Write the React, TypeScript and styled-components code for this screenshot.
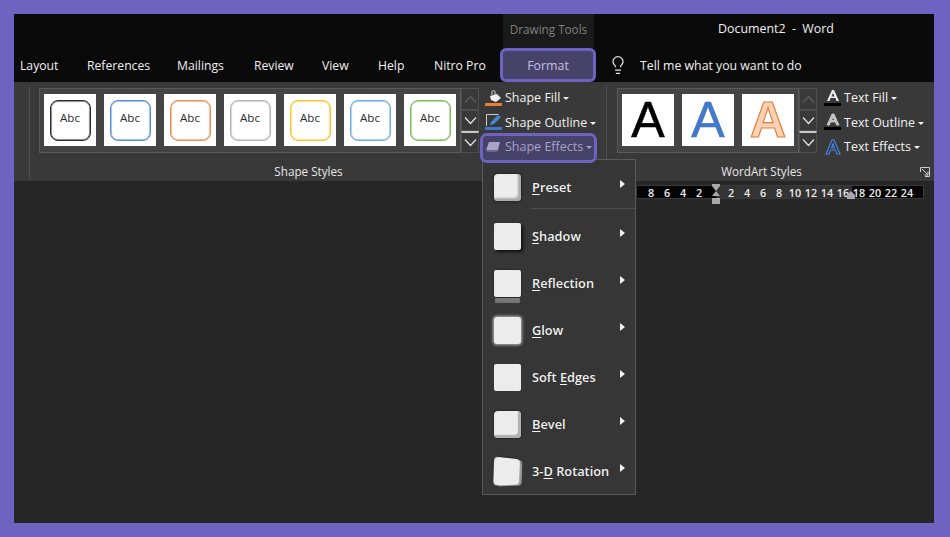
import React from "react";
import styled, { createGlobalStyle, css } from "styled-components";
import { Lightbulb } from "lucide-react";

const Global = createGlobalStyle`
  html, body { margin: 0; padding: 0; height: 537px; overflow: hidden; }
  body { background: #6e63c1; font-family: "Open Sans", "Noto Sans", sans-serif; }
  #root { height: 537px; }
`;

const Page = styled.div`
  box-sizing: border-box;
  height: 537px;
  padding: 14px 16px 14px 14px;
  background: #6e63c1;
`;
const Frame = styled.div`
  display: flex;
  flex-direction: column;
  height: 100%;
  background: #262626;
  color: #f0f0f0;
`;
const Header = styled.header`
  background: #0a0a0a;
  height: 68px;
  display: flex;
  flex-direction: column;
`;
const TitleRow = styled.div`
  height: 34px;
  display: flex;
  padding-left: 489px;
`;
const Context = styled.div`
  width: 91px;
  background: #1a1a1a;
  color: #808080;
  font-size: 11.7px;
  text-align: center;
  line-height: 31px;
`;
const DocTitle = styled.div`
  margin-left: 124px;
  font-size: 12.4px;
  line-height: 30px;
  white-space: pre;
`;
const Tabs = styled.nav`
  height: 34px;
  display: flex;
  align-items: center;
  padding-left: 6px;
`;
const Tab = styled.span<{ $w: number }>`
  width: ${(p) => p.$w}px;
  flex: none;
  font-size: 12.2px;
  white-space: nowrap;
`;
const FormatTab = styled.span`
  box-sizing: border-box;
  width: 96px;
  height: 34px;
  margin-left: -4px;
  border: 3px solid #6e63c1;
  border-radius: 6px;
  background: #474268;
  color: #c4bfe0;
  font-size: 12.4px;
  display: flex;
  align-items: center;
  justify-content: center;
`;
const Bulb = styled.span`
  margin-left: 12px;
  width: 32px;
  display: flex;
  color: #e8e8e8;
`;
const Search = styled.span`
  font-size: 12.3px;
`;
const Ribbon = styled.section`
  height: 99px;
  background: #393939;
  display: flex;
  padding-left: 15px;
  box-sizing: border-box;
`;
const Group = styled.div<{ $w: number; $pad: number }>`
  box-sizing: border-box;
  width: ${(p) => p.$w}px;
  height: 93px;
  margin-top: 4px;
  padding-left: ${(p) => p.$pad}px;
  border-left: 1px solid #4e4e4e;
  display: flex;
  flex-direction: column;
  position: relative;
`;
const GroupBody = styled.div`
  display: flex;
  height: 73px;
`;
const Gallery = styled.div`
  display: flex;
  align-items: flex-start;
  margin-top: 2px;
`;
const Thumbs = styled.div`
  box-sizing: border-box;
  height: 65px;
  border: 1px solid #5a5a5a;
  padding: 5px 4px;
  display: flex;
  gap: 8px;
  background: #444;
`;
const Thumb = styled.div`
  width: 52px;
  height: 52px;
  background: #fff;
  display: flex;
  align-items: center;
  justify-content: center;
`;
const AbcBox = styled.div<{ $c: string }>`
  box-sizing: border-box;
  width: 41px;
  height: 41px;
  border: 1px solid ${(p) => p.$c};
  box-shadow: inset 0 0 1px 0.5px ${(p) => p.$c};
  border-radius: 8px;
  padding-bottom: 5px;
  color: #2b2b2b;
  font-size: 11.6px;
  display: flex;
  align-items: center;
  justify-content: center;
`;
const BigA = styled.span<{ $c: string; $s: string; $sw: number; $bold?: boolean }>`
  font-family: "Liberation Sans", sans-serif;
  font-size: 50px;
  line-height: 1;
  color: ${(p) => p.$c};
  -webkit-text-stroke: ${(p) => p.$sw}px ${(p) => p.$s};
  ${(p) => p.$bold && css`font-weight: 700;`}
`;
const Spin = styled.div`
  width: 18px;
  display: flex;
  flex-direction: column;
  height: 65px;
`;
const SpinBtn = styled.div<{ $h: number; $dim?: boolean; $top?: boolean }>`
  box-sizing: border-box;
  height: ${(p) => p.$h}px;
  border: 1px solid #4e4e4e;
  ${(p) => p.$top && css`border-top: 2px solid #c8c8c8;`}
  display: flex;
  align-items: center;
  justify-content: center;
  color: ${(p) => (p.$dim ? "#5e5e5e" : "#e4e4e4")};
`;
const Commands = styled.div<{ $ml: number }>`
  margin-left: ${(p) => p.$ml}px;
  display: flex;
  flex-direction: column;
  margin-top: -0.5px;
`;
const Cmd = styled.div<{ $active?: boolean }>`
  position: relative;
  box-sizing: border-box;
  height: 24.5px;
  display: flex;
  align-items: center;
  gap: 2px;
  font-size: 12.5px;
  white-space: nowrap;
  ${(p) => p.$active && css`color: #a8a3c9;`}
`;
const Highlight = styled.div`
  position: absolute;
  z-index: 6;
  box-sizing: border-box;
  left: -5px;
  top: -2px;
  width: 117px;
  height: 30px;
  border: 3px solid #6e63c1;
  border-radius: 7px;
  background: #474268;
`;
const CmdIcon = styled.svg`
  width: 18px;
  height: 18px;
  flex: none;
  position: relative;
  z-index: 7;
`;
const CmdLabel = styled.span`
  position: relative;
  z-index: 7;
`;
const Caret = styled.span`
  position: relative;
  display: inline-block;
  margin-left: 3px;
  border-left: 3px solid transparent;
  border-right: 3px solid transparent;
  border-top: 3px solid currentColor;
  vertical-align: middle;
`;
const GroupLabel = styled.div<{ $pr: number }>`
  text-align: center;
  padding-right: ${(p) => p.$pr}px;
  font-size: 11.7px;
  line-height: 16px;
  margin-top: 4px;
  color: #e6e6e6;
`;
const Launcher = styled.svg`
  position: absolute;
  right: 4px;
  top: 81px;
  width: 10px;
  height: 10px;
`;
const RulerRow = styled.div`
  height: 12px;
  margin: 4px 0 0 622px;
  width: 286px;
  background: #050505;
  display: flex;
  font-size: 10.8px;
  font-weight: 600;
  line-height: 13px;
  border: 1px solid #3a3a3a;
  position: relative;
`;
const RulerActive = styled.div`
  position: absolute;
  left: 79px;
  top: 0;
  width: 136px;
  height: 12px;
  background: #333;
`;
const RulerNum = styled.span<{ $first?: boolean }>`
  position: relative;
  width: 16px;
  flex: none;
  text-align: center;
  color: #eee;
  ${(p) => p.$first && css`margin-left: 6px;`}
`;
const Marker = styled.svg<{ $left: number; $top: number }>`
  position: absolute;
  left: ${(p) => p.$left}px;
  top: ${(p) => p.$top}px;
`;
const Menu = styled.div`
  position: absolute;
  z-index: 5;
  left: -3px;
  top: 24.5px;
  width: 154px;
  height: 336px;
  box-sizing: border-box;
  background: #363636;
  border: 1px solid #5a5a5a;
  padding-top: 6px;
  color: #f2f2f2;
`;
const MenuRow = styled.div<{ $h: number }>`
  height: ${(p) => p.$h}px;
  display: flex;
  align-items: center;
  padding-left: 11px;
  position: relative;
`;
const Divider = styled.div`
  height: 1px;
  margin: 0 0 3.5px 48px;
  background: #4e4e4e;
`;
const MenuLabel = styled.span`
  font-size: 12.8px;
  font-weight: 600;
  margin-left: 11px;
  white-space: nowrap;
  text-shadow: 0 0 1px #0008;
  u { text-underline-offset: 2px; }
`;
const Arrow = styled.span`
  position: absolute;
  left: 137px;
  top: calc(50% - 7px);
  border-top: 4px solid transparent;
  border-bottom: 4px solid transparent;
  border-left: 5px solid #f2f2f2;
`;
type Fx = "preset" | "shadow" | "reflection" | "glow" | "soft" | "bevel" | "rot";
const fxStyles: Record<Fx, ReturnType<typeof css>> = {
  preset: css`border-radius: 4px; box-shadow: inset -3px -3px 2px #aaa, 0 0 3px #111;`,
  shadow: css`border-radius: 2px; box-shadow: 2px 2px 3px #111;`,
  reflection: css`border-radius: 2px; box-shadow: 0 1px 0 #2a2a2a, 0 7px 1px -1px #777, 0 0 2px #111;`,
  glow: css`border-radius: 3px; box-shadow: 0 0 3px 1px #b5b5b5;`,
  soft: css`border-radius: 2px; filter: blur(0.7px);`,
  bevel: css`border-radius: 4px; box-shadow: inset -3px -3px 1px #b0b0b0, 0 0 2px #111;`,
  rot: css`border-radius: 4px; transform: perspective(60px) rotateY(18deg) rotateZ(2deg); box-shadow: 3px 1px 0 #999, 0 0 2px #111;`,
};
const FxIcon = styled.span<{ $fx: Fx }>`
  display: block;
  flex: none;
  width: 27px;
  height: 27px;
  background: #ececec;
  ${(p) => fxStyles[p.$fx]}
`;

const Chevron = ({ up }: { up?: boolean }) => (
  <svg width="13" height="8" viewBox="0 0 13 8" fill="none" stroke="currentColor" strokeWidth="1.2">
    <path d={up ? "M1 7.5 6.5 1.5 12 7.5" : "M1 .5 6.5 6.5 12 .5"} />
  </svg>
);
const SpinColumn = () => (
  <Spin>
    <SpinBtn $h={22} $dim><Chevron up /></SpinBtn>
    <SpinBtn $h={21}><Chevron /></SpinBtn>
    <SpinBtn $h={22} $top><Chevron /></SpinBtn>
  </Spin>
);

const abc = ["#2a2a2a", "#5b8bd6", "#ee8d53", "#b4b4b4", "#fdc32c", "#6fa9e6", "#7fbb5d"];
const menu: { fx: Fx; pre: string; key: string; post: string }[] = [
  { fx: "shadow", pre: "", key: "S", post: "hadow" },
  { fx: "reflection", pre: "", key: "R", post: "eflection" },
  { fx: "glow", pre: "", key: "G", post: "low" },
  { fx: "soft", pre: "Soft ", key: "E", post: "dges" },
  { fx: "bevel", pre: "", key: "B", post: "evel" },
  { fx: "rot", pre: "3-", key: "D", post: " Rotation" },
];
const left = ["6", "4", "2"];
const right = ["2", "4", "6", "8", "10", "12", "14", "16", "18", "20", "22", "24"];

export default function App() {
  return (
    <Page>
      <Global />
      <Frame>
        <Header>
          <TitleRow>
            <Context>Drawing Tools</Context>
            <DocTitle>Document2  -  Word</DocTitle>
          </TitleRow>
          <Tabs>
            <Tab $w={67}>Layout</Tab>
            <Tab $w={90}>References</Tab>
            <Tab $w={77}>Mailings</Tab>
            <Tab $w={68}>Review</Tab>
            <Tab $w={56}>View</Tab>
            <Tab $w={56}>Help</Tab>
            <Tab $w={70}>Nitro Pro</Tab>
            <FormatTab>Format</FormatTab>
            <Bulb><Lightbulb size={20} strokeWidth={1.5} /></Bulb>
            <Search>Tell me what you want to do</Search>
          </Tabs>
        </Header>
        <Ribbon>
          <Group $w={577} $pad={9}>
            <GroupBody>
              <Gallery>
                <Thumbs>
                  {abc.map((c) => (
                    <Thumb key={c}><AbcBox $c={c}>Abc</AbcBox></Thumb>
                  ))}
                </Thumbs>
                <SpinColumn />
              </Gallery>
              <Commands $ml={6}>
                <Cmd>
                  <CmdIcon viewBox="0 0 18 18">
                    <path d="M5 7l7-2 4 4-5 4-5-2z" fill="#f2f2f2" />
                    <path d="M7 6V3c0-2 3-2 3 0v3" fill="none" stroke="#ddd" />
                    <rect x="0" y="14" width="17" height="3" fill="#ed7d31" />
                  </CmdIcon>
                  <CmdLabel>Shape Fill<Caret /></CmdLabel>
                </Cmd>
                <Cmd>
                  <CmdIcon viewBox="0 0 18 18">
                    <path d="M1.500 13V1.500h12" fill="none" stroke="#ccc" />
                    <path d="M5 12l1-3 7-7 3 2-7 7z" fill="#4a87d8" />
                    <rect x="0" y="14" width="17" height="3" fill="#3f78c9" />
                  </CmdIcon>
                  <CmdLabel>Shape Outline<Caret /></CmdLabel>
                </Cmd>
                <Cmd $active>
                  <Highlight />
                  <CmdIcon viewBox="0 0 18 18">
                    <path d="M4 4h11l-2 8H1z" fill="#a8a3c9" />
                    <path d="M1 12h12l-1 2H2z" fill="#6a6690" />
                  </CmdIcon>
                  <CmdLabel>Shape Effects<Caret /></CmdLabel>
                  <Menu>
                    <MenuRow $h={42}>
                      <FxIcon $fx="preset" />
                      <MenuLabel><u>P</u>reset</MenuLabel>
                      <Arrow />
                    </MenuRow>
                    <Divider />
                    {menu.map((m) => (
                      <MenuRow key={m.fx} $h={47}>
                        <FxIcon $fx={m.fx} />
                        <MenuLabel>{m.pre}<u>{m.key}</u>{m.post}</MenuLabel>
                        <Arrow />
                      </MenuRow>
                    ))}
                  </Menu>
                </Cmd>
              </Commands>
            </GroupBody>
            <GroupLabel $pr={28}>Shape Styles</GroupLabel>
          </Group>
          <Group $w={328} $pad={10}>
            <GroupBody>
              <Gallery>
                <Thumbs>
                  <Thumb><BigA $c="#000" $s="#000" $sw={0.6}>A</BigA></Thumb>
                  <Thumb><BigA $c="#4478c8" $s="#4478c8" $sw={0.6}>A</BigA></Thumb>
                  <Thumb><BigA $c="#f9d2b8" $s="#ea7f3c" $sw={1.2} $bold>A</BigA></Thumb>
                </Thumbs>
                <SpinColumn />
              </Gallery>
              <Commands $ml={7}>
                <Cmd>
                  <CmdIcon viewBox="0 0 18 18">
                    <path d="M3 12 8 1h2l5 11h-2.500l-1-3h-5l-1 3zM7.500 7.500h3L9 4z" fill="#ececec" />
                    <rect x="0" y="14" width="17" height="3" fill="#000" />
                  </CmdIcon>
                  <CmdLabel>Text Fill<Caret /></CmdLabel>
                </Cmd>
                <Cmd>
                  <CmdIcon viewBox="0 0 18 18">
                    <path d="M3 12 8 1h2l5 11h-2.500l-1-3h-5l-1 3zM7.500 7.500h3L9 4z" fill="#bdbdbd" stroke="#eee" strokeWidth=".6" />
                    <rect x="0" y="14" width="17" height="3" fill="#000" />
                  </CmdIcon>
                  <CmdLabel>Text Outline<Caret /></CmdLabel>
                </Cmd>
                <Cmd>
                  <CmdIcon viewBox="0 0 18 18">
                    <path d="M2 16 8 2h2l6 14h-3l-1.500-4h-5L5 16zM7.500 10h3L9 6z" fill="#26344d" stroke="#4a87d8" strokeWidth="1.2" />
                  </CmdIcon>
                  <CmdLabel>Text Effects<Caret /></CmdLabel>
                </Cmd>
              </Commands>
            </GroupBody>
            <GroupLabel $pr={28}>WordArt Styles</GroupLabel>
            <Launcher viewBox="0 0 10 10" fill="none" stroke="#cfcfcf">
              <path d="M.5 5V.5H9.500V9.500H5" />
              <path d="M2 2l6 6M8 4.500V8H4.500" />
            </Launcher>
          </Group>
        </Ribbon>
        <RulerRow>
          <RulerActive />
          <RulerNum $first>8</RulerNum>
          {left.map((n) => <RulerNum key={n}>{n}</RulerNum>)}
          <RulerNum />
          {right.map((n) => <RulerNum key={n}>{n}</RulerNum>)}
          <Marker $left={74} $top={-2} width="10" height="22" viewBox="0 0 10 22" fill="#a8a8a8">
            <path d="M1 0h8v2L5 7 1 2zM5 7l4 5H1z" />
            <path d="M1 14h8v6H1z" />
          </Marker>
          <Marker $left={209} $top={5} width="10" height="8" viewBox="0 0 10 8" fill="#a8a8a8">
            <path d="M5 0l4 4v4H1V4z" />
          </Marker>
        </RulerRow>
      </Frame>
    </Page>
  );
}
